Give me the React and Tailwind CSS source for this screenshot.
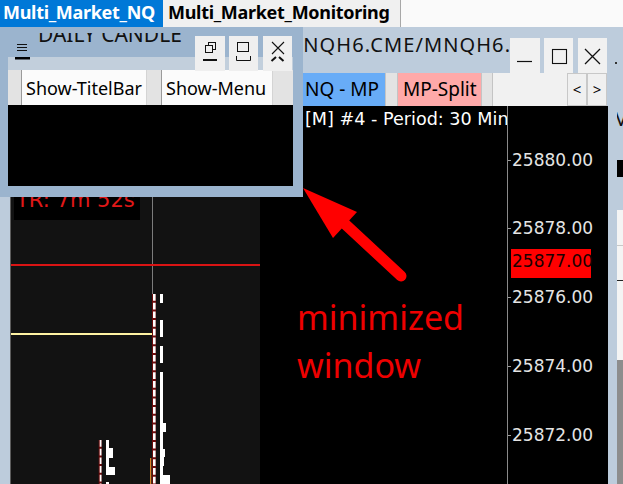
import React from "react";

const dejavu = "font-['DejaVu_Sans',sans-serif]";

/* ---------- top workspace tabs ---------- */
function WorkspaceTabs() {
  return (
    <div className="flex h-[27px] bg-[#fafafa] text-[18px] font-bold tracking-[-0.3px] leading-[24px] whitespace-nowrap">
      <div className="w-[163px] bg-[#0078d7] text-white pl-[3px]">Multi_Market_NQ</div>
      <div className="w-[238px] bg-[#f0f0f0] border-r border-[#a8a8a8] pl-[5px] text-black">
        Multi_Market_Monitoring
      </div>
    </div>
  );
}

/* ---------- caption buttons of the chart window ---------- */
function CaptionBox({ className, children }) {
  return <div className={`h-[35px] bg-[#f1f1f1] ${className}`}>{children}</div>;
}

function ChartCaptionButtons() {
  return (
    <div className="flex pt-[11px] pr-[1px]">
      <CaptionBox className="w-[30px]">
        <svg width="30" height="35">
          <line x1="7" y1="23.5" x2="22" y2="23.5" stroke="#111" strokeWidth="1.2" />
        </svg>
      </CaptionBox>
      <CaptionBox className="w-[29px] ml-[4px]">
        <svg width="29" height="35">
          <rect x="8.5" y="11.5" width="14" height="14" fill="none" stroke="#111" strokeWidth="1.1" />
        </svg>
      </CaptionBox>
      <CaptionBox className="w-[29px] ml-[5px]">
        <svg width="29" height="35">
          <path d="M7 11L22 26M22 11L7 26" stroke="#111" strokeWidth="1.3" />
        </svg>
      </CaptionBox>
    </div>
  );
}

/* ---------- chart panes ---------- */
function ProfilePane() {
  const bars = [
    [188, 197, 3], [214, 231, 3], [240, 257, 3], [266, 317, 3], [317, 326, 6],
    [326, 343, 3], [343, 351, 5], [351, 360, 4], [360, 369, 3], [369, 378, 10],
  ];
  const smallBars = [[334, 342, 3], [342, 352, 7], [352, 361, 3], [361, 369, 9], [376, 378, 3]];
  return (
    <div className="relative w-[249px] bg-[#121212] overflow-hidden">
      <svg className="absolute left-0 top-0" width="249" height="378">
        <line x1="141.5" y1="0" x2="141.5" y2="188" stroke="#7c7c7c" strokeWidth="1" />
        <rect x="0" y="158" width="249" height="2" fill="#d91414" />
        <rect x="0" y="227" width="141" height="2" fill="#fff3a3" />

        <rect x="141" y="188" width="4" height="190" fill="#6a0b0b" />
        <line x1="143.3" y1="188" x2="143.3" y2="378" stroke="#fff" strokeWidth="2.6" strokeDasharray="6.7 2" />
        {bars.map(([a, b, w]) => (
          <rect key={a} x="149" y={a} width={w} height={b - a} fill="#fff" />
        ))}
        <rect x="139" y="352" width="1.3" height="26" fill="#d9822b" />

        <rect x="87.7" y="334" width="3" height="44" fill="#6a0b0b" />
        <line x1="89.6" y1="334" x2="89.6" y2="378" stroke="#fff" strokeWidth="1.8" strokeDasharray="6.7 2" />
        {smallBars.map(([a, b, w]) => (
          <rect key={a} x="95" y={a} width={w} height={b - a} fill="#fff" />
        ))}
      </svg>
      <div className={`absolute left-[3px] top-[70px] w-[126px] h-[44px] bg-black pl-[2px] pt-[12px] ${dejavu} text-[21px] leading-[24px] text-[#e01818] whitespace-nowrap`}>
        TR: 7m 52s
      </div>
    </div>
  );
}

function PricePane() {
  return (
    <div className="relative w-[247px] bg-black overflow-hidden">
      <div className={`absolute left-[45px] top-[3px] ${dejavu} text-[17.6px] leading-[20px] text-white whitespace-nowrap`}>
        [M] #4 - Period: 30 Min
      </div>
    </div>
  );
}

function PriceAxis() {
  const labels = [
    ["25880.00", 44],
    ["25878.00", 112],
    ["25876.00", 181],
    ["25874.00", 250],
    ["25872.00", 319],
  ];
  return (
    <div className={`relative w-[101px] bg-black border-l border-[#8a8a8a] ${dejavu} text-[17px] leading-[20px]`}>
      {labels.map(([t, top]) => (
        <React.Fragment key={t}>
          <div className="absolute left-0 w-[3px] h-[1px] bg-[#9a9a9a]" style={{ top: top + 10 }} />
          <div className="absolute left-[4px] text-[#e4e4e4]" style={{ top }}>
            {t}
          </div>
        </React.Fragment>
      ))}
      <div className="absolute left-[3px] top-[143px] w-[80px] h-[29px] bg-[#ff0000] pl-[1px] pt-[2px] text-[#1a0000]">
        25877.00
      </div>
    </div>
  );
}

/* ---------- the chart window behind ---------- */
function ChartWindow() {
  return (
    <div className="flex flex-col w-[608px]">
      <div className="flex h-[46px]">
        <div className="flex-1 min-w-0 overflow-hidden whitespace-nowrap pl-[284px] pt-[4px] text-[20px] leading-[28px] tracking-[1.1px] text-[#111]">
          MNQH6.CME/MNQH6.
        </div>
        <ChartCaptionButtons />
      </div>

      <div className="flex h-[33px] bg-[#f0f0f0] text-[19px] leading-[33px] text-black whitespace-nowrap">
        <div className="w-[296px] bg-[#e3e3e3]" />
        <div className="w-[89px] bg-[#68acf7] pl-[9px]">NQ - MP</div>
        <div className="w-[13px] bg-[#e3e3e3] border-x border-[#c4c4c4]" />
        <div className="w-[83px] bg-[#ffa9a9] pl-[5px]">MP-Split</div>
        <div className="w-[12px] bg-[#e3e3e3] border-x border-[#c4c4c4]" />
        <div className="flex-1 bg-[#f1f1f1]" />
        <div className="w-[20px] bg-[#f0f0f0] border border-[#c8c8c8] text-[15px] leading-[31px] text-center">&lt;</div>
        <div className="w-[20px] bg-[#f0f0f0] border border-[#c8c8c8] text-[15px] leading-[31px] text-center">&gt;</div>
        <div className="w-[1px] bg-[#bdccdc]" />
      </div>

      <div className="flex h-[378px]">
        <div className="w-[10px] bg-[#bdccdc]" />
        <div className="w-[1px] bg-[#5c5c5c]" />
        <ProfilePane />
        <PricePane />
        <PriceAxis />
      </div>
    </div>
  );
}

/* ---------- edge of the neighbouring window ---------- */
function NeighbourEdge() {
  return (
    <div className="flex flex-col w-[15px]">
      <div className="relative h-[80px]">
        <div className="absolute left-[7px] top-[35px] w-[2px] h-[2px] bg-[#333]" />
      </div>
      <div className="h-[53px] pl-[9px]">
        <div className="w-[6px] h-full overflow-hidden text-[20px] leading-[24px] text-[#111]">
          <span className="block ml-[-2px]">V</span>
        </div>
      </div>
      <div className="h-[17px] pl-[9px]">
        <div className="w-[6px] h-full bg-black" />
      </div>
      <div className="h-[33px]" />
      <div className="h-[150px] pl-[9px]">
        <div className="w-[6px] h-full bg-[#f4f4f4] flex flex-col">
          <div className="h-[35px]" />
          <div className="h-[1px] bg-[#c8c8c8]" />
          <div className="h-[34px]" />
          <div className="h-[1px] bg-[#222]" />
        </div>
      </div>
      <div className="flex-1 pl-[9px]">
        <div className="w-[6px] h-full bg-[#8d8d8d]" />
      </div>
    </div>
  );
}

/* ---------- floating minimized window ---------- */
function SmallBox({ className, children }) {
  return <div className={`h-[35px] bg-[#efefef] ${className}`}>{children}</div>;
}

function MinimizedWindow() {
  return (
    <div className="absolute left-0 top-[27px] w-[303px] h-[170px] bg-[#9bb4ce] pl-[8px] pr-[10px] pb-[11px] flex flex-col">
      <div className="relative z-10 flex items-start h-[30px]">
        <svg width="15" height="33" className="block shrink-0 ml-[7px]">
          <path d="M2 17.5H12M2 20.5H12M2 23.5H12" stroke="#111" strokeWidth="1.2" />
          <rect x="0" y="30" width="15" height="2.5" fill="#000" />
        </svg>
        <div className="ml-[8px] mt-[6px] w-[150px] h-[24px] overflow-hidden">
          <div className="mt-[-13px] text-[21px] leading-[28px] text-[#111] whitespace-nowrap">DAILY CANDLE</div>
        </div>
        <div className="ml-auto mr-[1px] mt-[9px] flex">
          <SmallBox className="w-[30px]">
            <svg width="30" height="35">
              <rect x="13.5" y="6.5" width="7" height="7" fill="none" stroke="#111" strokeWidth="1" />
              <rect x="10.5" y="9.5" width="7" height="7" fill="#efefef" stroke="#111" strokeWidth="1" />
              <rect x="8" y="23" width="14" height="2" fill="#111" />
            </svg>
          </SmallBox>
          <SmallBox className="w-[29px] ml-[4px]">
            <svg width="29" height="35">
              <rect x="8.5" y="6.5" width="11" height="9" fill="none" stroke="#111" strokeWidth="1" />
              <path d="M7.5 20V24.5H21.5V20" fill="none" stroke="#111" strokeWidth="1" />
            </svg>
          </SmallBox>
          <SmallBox className="w-[29px] ml-[5px]">
            <svg width="29" height="35">
              <path d="M9 6L21 18M21 6L9 18" stroke="#111" strokeWidth="1.1" />
              <path d="M13 21L8.5 25M16 21L20.5 25" stroke="#111" strokeWidth="2" />
            </svg>
          </SmallBox>
        </div>
      </div>
      <div className="h-[13px] bg-[#c2cfdc]" />
      <div className="flex h-[35px] bg-[#e3e3e3] text-[18px] leading-[37px] text-black whitespace-nowrap">
        <div className="w-[13px]" />
        <div className="w-[126px] bg-[#fbfbfb] border-l border-r border-l-[#9a9a9a] border-r-[#d4d4d4] pl-[4px]">
          Show-TitelBar
        </div>
        <div className="w-[14px]" />
        <div className="w-[112px] bg-[#fbfbfb] border-l border-r border-l-[#9a9a9a] border-r-[#d4d4d4] pl-[4px]">
          Show-Menu
        </div>
      </div>
      <div className="flex-1 bg-black" />
    </div>
  );
}

/* ---------- callout ---------- */
function Callout() {
  return (
    <>
      <svg className="absolute left-0 top-0 pointer-events-none" width="623" height="484">
        <line x1="345" y1="224" x2="401" y2="276" stroke="#ff0000" strokeWidth="11" strokeLinecap="round" />
        <polygon points="303,188 357,212 333,238" fill="#ff0000" />
      </svg>
      <div className="absolute left-[297px] top-[293px] text-[34px] leading-[48px] text-[#ee0000] whitespace-nowrap">
        minimized
        <br />
        window
      </div>
    </>
  );
}

export default function App() {
  return (
    <div className="relative w-[623px] h-[484px] overflow-hidden bg-[#bdccdc] font-['Noto_Sans',sans-serif]">
      <WorkspaceTabs />
      <div className="flex h-[457px]">
        <ChartWindow />
        <NeighbourEdge />
      </div>
      <MinimizedWindow />
      <Callout />
    </div>
  );
}
